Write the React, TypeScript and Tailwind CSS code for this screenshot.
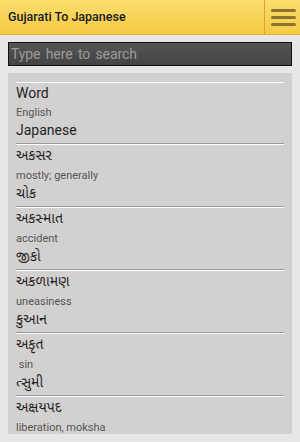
const entries = [
  { word: "અકસર", english: "mostly; generally", japanese: "ચોક" },
  { word: "અકસ્માત", english: "accident", japanese: "જીકો" },
  { word: "અકળામણ", english: "uneasiness", japanese: "કુઆન" },
  { word: "અકૃત", english: " sin", japanese: "ત્સુમી" },
  { word: "અક્ષયપદ", english: "liberation, moksha" },
];

function Separator() {
  return (
    <div className="flex flex-col">
      <div className="h-px bg-[#9a9898]" />
      <div className="h-px bg-white" />
    </div>
  );
}

export default function App() {
  return (
    <div className="flex h-[442px] w-[300px] flex-col overflow-hidden bg-[#e9e6e6] font-['Roboto','Noto_Sans','Noto_Sans_Gujarati',sans-serif]">
      {/* action bar */}
      <header className="flex h-[35px] shrink-0 items-stretch border-b border-[#e2b53a] bg-gradient-to-b from-[#fadd6c] to-[#f4ca42]">
        <h1 className="flex flex-1 items-center pl-2 text-[12.5px] font-medium text-[#1a1a22]">Gujarati To Japanese</h1>
        <button className="flex w-[36px] flex-col items-center justify-center gap-[4px] border-l border-[#d9a532] pl-[1px]">
          <span className="h-[3px] w-[25px] rounded-full bg-[#8c7332]" />
          <span className="h-[3px] w-[25px] rounded-full bg-[#8c7332]" />
          <span className="h-[3px] w-[25px] rounded-full bg-[#8c7332]" />
        </button>
      </header>

      {/* search */}
      <div className="px-2 pt-[7px]">
        <input
          className="h-[24px] w-full border border-[#111] bg-gradient-to-b from-[#555] to-[#444] px-[2px] text-[14px] tracking-[-0.1px] text-white outline-none [word-spacing:2px] placeholder:text-[#9b9b9b]"
          placeholder="Type here to search"
        />
      </div>

      {/* list */}
      <div className="mx-2 mt-[7px] h-[361px] overflow-hidden bg-[#d3d0d0] px-2 pt-[9px]">
        <div className="h-px bg-white" />
        <div className="pb-[3px] text-[#1f1f1f]">
          <div className="flex h-5 items-center text-[14px]">Word</div>
          <div className="mt-[3px] flex h-[14px] items-center text-[11px] text-[#555]">English</div>
          <div className="flex h-5 items-center text-[14px]">Japanese</div>
        </div>
        {entries.map((e) => (
          <div key={e.word}>
            <Separator />
            <div className="pb-[3px] text-[#1f1f1f]">
              <div className="flex h-5 items-center text-[14px]">{e.word}</div>
              <div className="mt-1 flex h-[14px] items-center whitespace-pre text-[11px] text-[#555]">{e.english}</div>
              {e.japanese && <div className="flex h-5 items-center text-[14px]">{e.japanese}</div>}
            </div>
          </div>
        ))}
      </div>
    </div>
  );
}
